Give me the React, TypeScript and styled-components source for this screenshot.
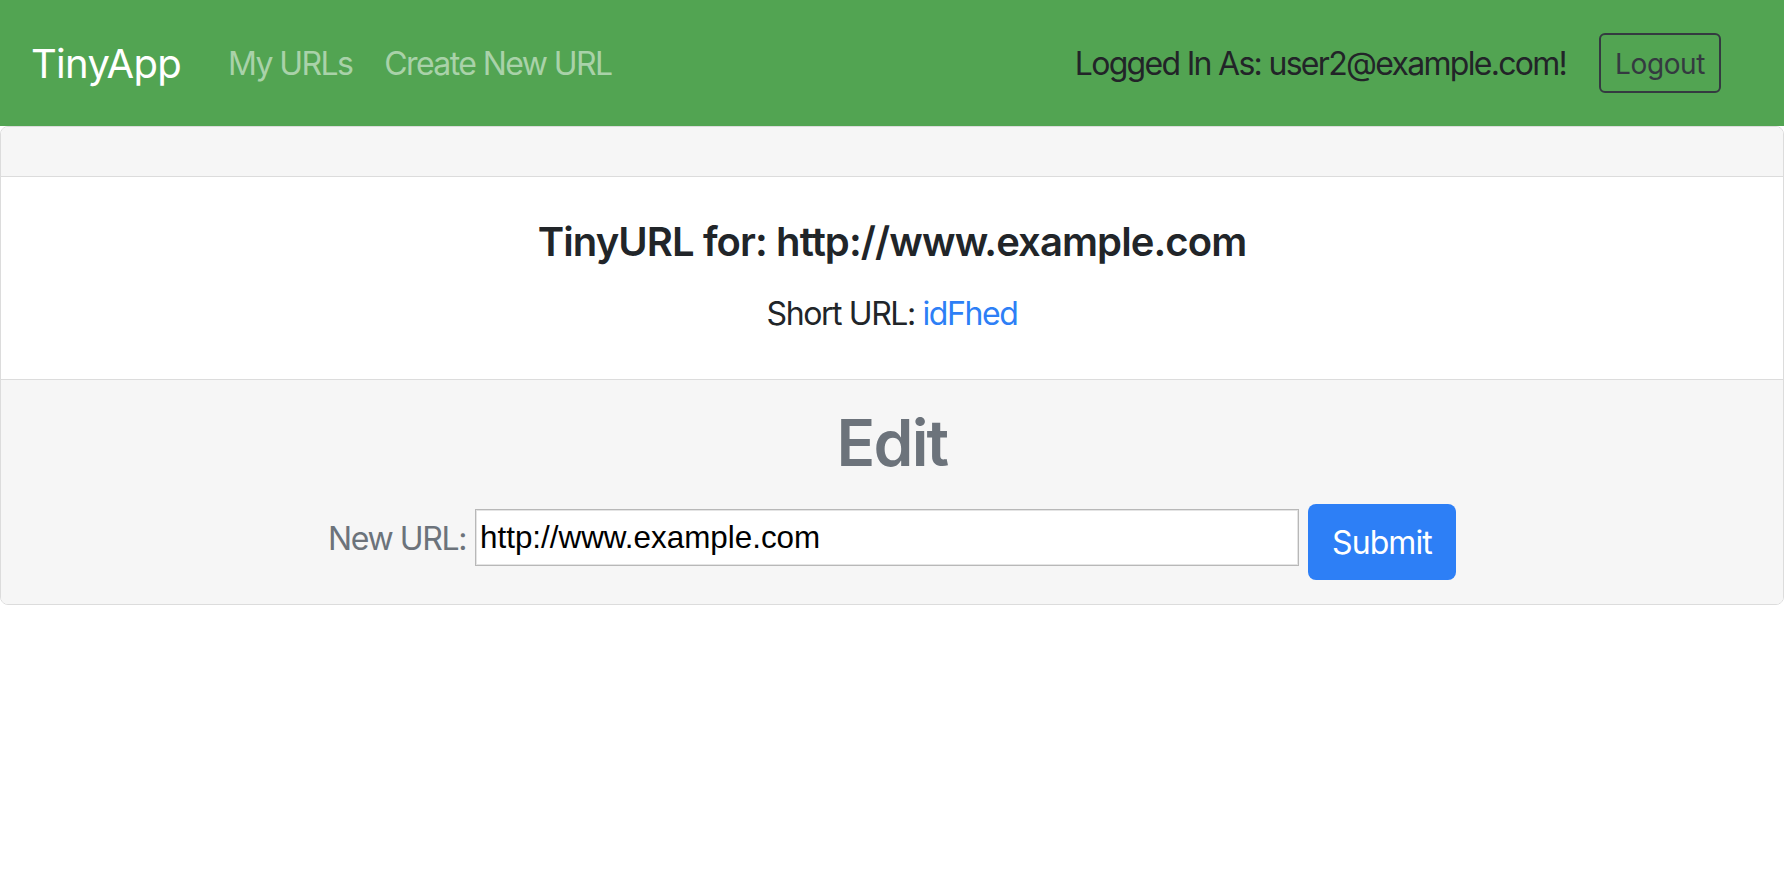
import React from "react";
import styled, { createGlobalStyle } from "styled-components";

const GlobalStyle = createGlobalStyle`
  html, body {
    margin: 0;
    padding: 0;
    background: #ffffff;
  }
  body {
    font-family: Inter, "Noto Sans", "Liberation Sans", sans-serif;
    color: #212529;
  }
  * { box-sizing: border-box; }
`;

const NavBar = styled.nav`
  height: 126px;
  background: #52a452;
  display: flex;
  align-items: center;
  padding: 0 63px 0 31px;
`;

const Brand = styled.a`
  font-size: 40px;
  line-height: 60px;
  padding-top: 2px;
  color: #ffffff;
  text-decoration: none;
  margin-right: 31px;
  letter-spacing: -0.7px;
`;

const NavLinks = styled.div`
  display: flex;
  align-items: center;
  flex: 1;
`;

const NavLink = styled.a`
  font-size: 32px;
  line-height: 48px;
  padding: 2px 16px 0;
  color: #a9d2a9;
  text-decoration: none;
  letter-spacing: -1.6px;
`;

const UserArea = styled.div`
  display: flex;
  align-items: center;
  gap: 33px;
`;

const UserText = styled.span`
  font-size: 32px;
  line-height: 48px;
  padding-top: 2px;
  color: #222428;
  letter-spacing: -1.7px;
`;

const OutlineButton = styled.button`
  font-family: inherit;
  font-size: 28px;
  line-height: 42px;
  height: 60px;
  padding: 2px 14px 0;
  color: #343a40;
  background: transparent;
  border: 2px solid #343a40;
  border-radius: 6px;
  letter-spacing: -0.4px;
`;

const Card = styled.section`
  border: 1px solid #dcdcdc;
  border-radius: 8px;
  overflow: hidden;
`;

const CardHeader = styled.div`
  height: 50px;
  background: #f6f6f6;
  border-bottom: 1px solid #dcdcdc;
`;

const CardBody = styled.div`
  padding: 41px 40px 41px;
  text-align: center;
`;

const CardTitle = styled.h5`
  margin: 0 0 24px;
  font-size: 40px;
  line-height: 48px;
  font-weight: 600;
  color: #212529;
  letter-spacing: -0.9px;
`;

const CardText = styled.p`
  margin: 0;
  font-size: 32px;
  line-height: 48px;
  color: #212529;
  letter-spacing: -1.4px;
`;

const ShortLink = styled.a`
  color: #2d7ff6;
  text-decoration: none;
`;

const CardFooter = styled.div`
  background: #f6f6f6;
  border-top: 1px solid #dcdcdc;
  padding: 24px 40px 24px;
  text-align: center;
`;

const EditTitle = styled.h2`
  margin: 0 0 23px;
  font-size: 64px;
  line-height: 77px;
  font-weight: 600;
  color: #6c737b;
  letter-spacing: -1.8px;
`;

const FormRow = styled.form`
  display: flex;
  justify-content: center;
  align-items: flex-start;
  gap: 9px;
`;

const FieldLabel = styled.label`
  font-size: 32px;
  line-height: 48px;
  margin-top: 11px;
  color: #6c737b;
  letter-spacing: -1.4px;
`;

const TextInput = styled.input`
  width: 824px;
  height: 57px;
  margin-top: 5px;
  padding: 0 4px;
  font-family: "Liberation Sans", Arial, sans-serif;
  font-size: 31.4px;
  color: #000000;
  background: #ffffff;
  border: 1px solid #b8b8b8;
  box-shadow: inset 0 0 0 1px #e4e4e4;
  border-radius: 0;
  outline: none;
`;

const PrimaryButton = styled.button`
  height: 76px;
  padding: 0 24px;
  font-family: inherit;
  font-size: 32px;
  color: #ffffff;
  background: #2d7ff6;
  border: none;
  border-radius: 8px;
  letter-spacing: -0.9px;
`;

export default function App() {
  return (
    <>
      <GlobalStyle />
      <NavBar>
        <Brand href="#">TinyApp</Brand>
        <NavLinks>
          <NavLink href="#">My URLs</NavLink>
          <NavLink href="#">Create New URL</NavLink>
        </NavLinks>
        <UserArea>
          <UserText>Logged In As: user2@example.com!</UserText>
          <OutlineButton type="button">Logout</OutlineButton>
        </UserArea>
      </NavBar>
      <Card>
        <CardHeader />
        <CardBody>
          <CardTitle>TinyURL for: http://www.example.com</CardTitle>
          <CardText>
            Short URL: <ShortLink href="#">idFhed</ShortLink>
          </CardText>
        </CardBody>
        <CardFooter>
          <EditTitle>Edit</EditTitle>
          <FormRow onSubmit={(e) => e.preventDefault()}>
            <FieldLabel htmlFor="longURL">New URL:</FieldLabel>
            <TextInput id="longURL" type="text" defaultValue="http://www.example.com" />
            <PrimaryButton type="submit">Submit</PrimaryButton>
          </FormRow>
        </CardFooter>
      </Card>
    </>
  );
}
